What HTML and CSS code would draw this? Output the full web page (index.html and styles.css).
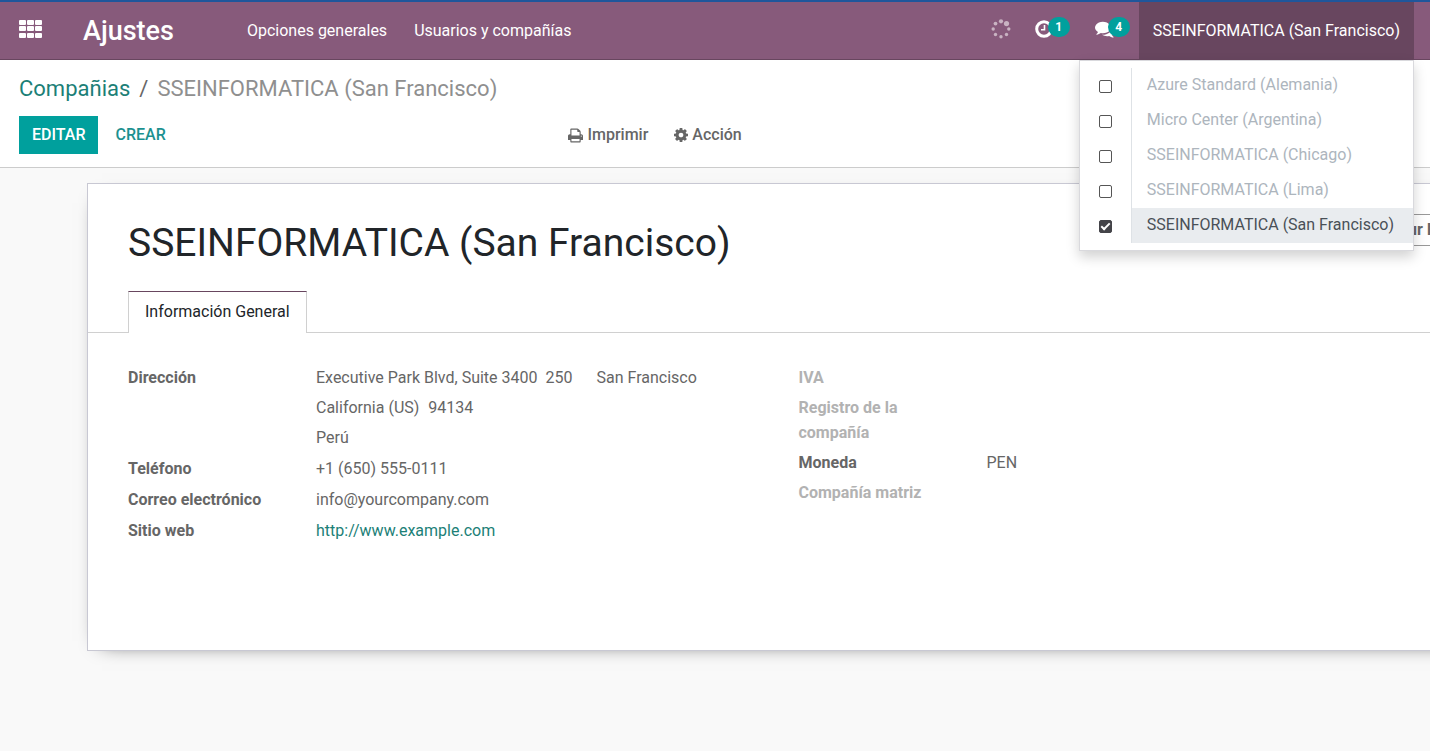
FILE: index.html
```html
<!DOCTYPE html>
<html lang="es">
<head>
<meta charset="utf-8">
<title>Ajustes - SSEINFORMATICA (San Francisco)</title>
<link rel="stylesheet" href="styles.css">
</head>
<body>
<header class="navbar">
  <button class="apps" type="button" aria-label="Aplicaciones">
    <svg width="24" height="18" viewBox="0 0 24 18" fill="#fff"><rect width="7" height="5" rx="1"/><rect x="8" width="7" height="5" rx="1"/><rect x="16" width="7" height="5" rx="1"/><rect y="6" width="7" height="5" rx="1"/><rect x="8" y="6" width="7" height="5" rx="1"/><rect x="16" y="6" width="7" height="5" rx="1"/><rect y="13" width="7" height="5" rx="1"/><rect x="8" y="13" width="7" height="5" rx="1"/><rect x="16" y="13" width="7" height="5" rx="1"/></svg>
  </button>
  <a class="brand" href="#">Ajustes</a>
  <nav class="menu">
    <a href="#">Opciones generales</a>
    <a href="#">Usuarios y compañías</a>
  </nav>
  <div class="systray">
    <svg class="spinner" width="20" height="20" viewBox="0 0 20 20" fill="#c9b3c2"><circle cx="10" cy="2.3" r="2.1"/><circle cx="15.5" cy="4.6" r="2.6"/><circle cx="17.8" cy="10" r="1.7"/><circle cx="15.5" cy="15.5" r="1.7"/><circle cx="10" cy="17.8" r="1.7"/><circle cx="4.5" cy="15.5" r="1.7"/><circle cx="2.2" cy="10" r="1.7"/><circle cx="4.5" cy="4.6" r="1.9"/></svg>
    <button class="tray" type="button" aria-label="Actividades">
      <svg width="18" height="18" viewBox="0 0 18 18" fill="none" stroke="#fff"><circle cx="9" cy="9" r="7.3" stroke-width="3"/><path d="M9.500 5V9.800H6" stroke-width="1.6"/></svg>
      <span class="badge">1</span>
    </button>
    <button class="tray" type="button" aria-label="Conversaciones">
      <svg width="20" height="20" viewBox="0 0 1792 1792" fill="#fff"><path d="M1408 768q0 139-94 257t-256.500 186.500-353.500 68.500q-86 0-176-16-124 88-278 128-36 9-86 16h-3q-11 0-20.500-8t-11.500-21q-1-3-1-6.500t.5-6.500 2-6l2.500-5 3.500-5.500 4-5 4.500-5 4-4.500q5-6 23-25t26-29.500 22.500-29 25-38.500 20.500-44q-124-72-195-177t-71-224q0-139 94-257t256.500-186.500 353.500-68.500 353.500 68.500 256.500 186.500 94 257zm384 256q0 120-71 224.500t-195 176.500q10 24 20.500 44t25 38.500 22.500 29 26 29.500 23 25q1 1 4 4.500t4.500 5 4 5 3.500 5.500l2.500 5 2 6 .5 6.500-1 6.500q-3 14-13 22t-22 7q-50-7-86-16-154-40-278-128-90 16-176 16-271 0-472-132 58 4 88 4 161 0 309-45t264-129q125-92 192-212t67-254q0-77-23-152 129 71 204 178t75 230z"/></svg>
      <span class="badge">4</span>
    </button>
    <div class="company">
      <button class="company-toggle" type="button" aria-expanded="true">SSEINFORMATICA (San Francisco)</button>
      <div class="dropdown">
        <div class="option"><span class="tick"><input type="checkbox" id="c1"></span><label for="c1">Azure Standard (Alemania)</label></div>
        <div class="option"><span class="tick"><input type="checkbox" id="c2"></span><label for="c2">Micro Center (Argentina)</label></div>
        <div class="option"><span class="tick"><input type="checkbox" id="c3"></span><label for="c3">SSEINFORMATICA (Chicago)</label></div>
        <div class="option"><span class="tick"><input type="checkbox" id="c4"></span><label for="c4">SSEINFORMATICA (Lima)</label></div>
        <div class="option selected"><span class="tick"><input type="checkbox" id="c5" checked></span><label for="c5">SSEINFORMATICA (San Francisco)</label></div>
      </div>
    </div>
  </div>
</header>

<section class="control-panel">
  <div class="breadcrumb"><a href="#">Compañias</a><span class="slash">/</span><span class="current">SSEINFORMATICA (San Francisco)</span></div>
  <div class="toolbar">
    <div class="main-actions">
      <button class="btn primary" type="button">EDITAR</button>
      <button class="btn plain" type="button">CREAR</button>
    </div>
    <div class="more-actions">
      <button class="btn tool" type="button"><svg width="15" height="15" viewBox="64 64 1664 1664" fill="#666"><path d="M448 1536h896v-256h-896v256zm0-640h896v-384h-160q-40 0-68-28t-28-68v-160h-640v640zm1152 64q0-26-19-45t-45-19-45 19-19 45 19 45 45 19 45-19 19-45zm128 0v416q0 13-9.500 22.500t-22.500 9.500h-224v160q0 40-28 68t-68 28h-960q-40 0-68-28t-28-68v-160h-224q-13 0-22.500-9.500t-9.500-22.500v-416q0-79 56.500-135.500t135.500-56.500h64v-544q0-40 28-68t68-28h672q40 0 88 20t76 48l152 152q28 28 48 76t20 88v256h64q79 0 135.500 56.500t56.500 135.500z"/></svg>Imprimir</button>
      <button class="btn tool" type="button"><svg width="14" height="14" viewBox="128 128 1536 1536" fill="#666"><path d="M1152 896q0-106-75-181t-181-75-181 75-75 181 75 181 181 75 181-75 75-181zm512-109v222q0 12-8 23t-20 13l-185 28q-19 54-39 91 35 50 107 138 10 12 10 25t-9 23q-27 37-99 108t-94 71q-12 0-26-9l-138-108q-44 23-91 38-16 136-29 186-7 28-36 28h-222q-14 0-24.500-8.500t-11.500-21.500l-28-184q-49-16-90-37l-141 107q-10 9-25 9-14 0-25-11-126-114-165-168-7-10-7-23 0-12 8-23 15-21 51-66.500t54-70.500q-27-50-41-99l-183-27q-13-2-21-12.500t-8-23.500v-222q0-12 8-23t19-13l186-28q14-46 39-92-40-57-107-138-10-12-10-24 0-10 9-23 26-36 98.500-107.500t94.500-71.500q13 0 26 10l138 107q44-23 91-38 16-136 29-186 7-28 36-28h222q14 0 24.500 8.500t11.500 21.500l28 184q49 16 90 37l142-107q9-9 24-9 13 0 25 10 129 119 165 170 7 8 7 22 0 12-8 23-15 21-51 66.500t-54 70.500q26 50 41 98l183 28q13 2 21 12.500t8 23.500z"/></svg>Acción</button>
    </div>
  </div>
</section>

<main class="content">
  <article class="sheet">
    <div class="title-row">
      <h1>SSEINFORMATICA (San Francisco)</h1>
      <button class="layout-btn" type="button">ur I</button>
    </div>
    <div class="tabs" role="tablist"><button class="tab" type="button" role="tab" aria-selected="true">Información General</button></div>
    <div class="groups">
      <dl class="group">
        <dt>Dirección</dt>
        <dd class="address">
          <div class="line"><span>Executive Park Blvd, Suite 3400</span><span class="number">250</span><span class="city">San Francisco</span></div>
          <div class="line"><span>California (US)</span><span class="zip">94134</span></div>
          <div class="line">Perú</div>
        </dd>
        <dt>Teléfono</dt><dd>+1 (650) 555-0111</dd>
        <dt>Correo electrónico</dt><dd>info@yourcompany.com</dd>
        <dt>Sitio web</dt><dd><a href="#">http://www.example.com</a></dd>
      </dl>
      <dl class="group compact">
        <dt class="empty">IVA</dt><dd></dd>
        <dt class="empty">Registro de la compañía</dt><dd></dd>
        <dt>Moneda</dt><dd>PEN</dd>
        <dt class="empty">Compañía matriz</dt><dd></dd>
      </dl>
    </div>
  </article>
</main>
</body>
</html>
```
FILE: styles.css
```css
* { box-sizing: border-box; }
body {
  margin: 0;
  min-height: 100vh;
  overflow: hidden;
  display: flex;
  flex-direction: column;
  background: #f9f9f9;
  color: #666;
  font: 16px/24px Roboto, sans-serif;
}
button { border: 0; padding: 0; background: none; font: inherit; color: inherit; cursor: pointer; }
a { color: #1c7f77; text-decoration: none; }
svg { display: block; flex: none; }

.navbar {
  display: flex;
  align-items: stretch;
  height: 60px;
  padding: 0 16px 0 19px;
  background: #875a7b;
  border-top: 2px solid #1f569b;
  border-bottom: 1px solid #68465f;
  color: #fff;
}
.navbar a { color: #fff; }
.apps { margin-right: 40px; padding-bottom: 3px; }
.brand { align-self: center; font-size: 27px; font-weight: 500; }
.menu { display: flex; align-items: center; gap: 27px; margin-left: 73px; }
.systray { display: flex; margin-left: auto; }
.spinner { margin: 17px 24px 0 0; }
.tray { position: relative; width: 36px; margin-right: 24px; padding-bottom: 3px; }
.tray:nth-of-type(2) { margin-right: 8px; }
.badge {
  position: absolute;
  left: 13px;
  top: 15px;
  min-width: 22px;
  height: 20px;
  border-radius: 10px;
  background: #00a09d;
  font-size: 12px;
  font-weight: 700;
  line-height: 20px;
  text-align: center;
}
.company { position: relative; display: flex; }
.company-toggle { padding: 0 14px; background: #68465f; }
.dropdown {
  position: absolute;
  right: 0;
  top: 58px;
  z-index: 2;
  padding: 7px 0;
  background: #fff;
  border: 1px solid #d9d9dd;
  box-shadow: 0 6px 12px rgba(0, 0, 0, .18);
  white-space: nowrap;
}
.option { display: flex; height: 35px; color: #adb5bd; }
.tick { display: flex; align-items: center; justify-content: center; width: 52px; padding-top: 2px; border-right: 1px solid #dee2e6; }
.option label { flex: 1; padding: 0 19px 0 15px; line-height: 34px; }
.selected label { background: #e9ecef; color: #495057; }
.tick input {
  appearance: none;
  position: relative;
  width: 13px;
  height: 13px;
  margin: 0;
  border: 1px solid #555;
  border-radius: 2px;
}
.tick input:checked { background: #444449; border-color: #444449; }
.tick input:checked::after {
  content: "";
  position: absolute;
  left: 3px;
  top: 0;
  box-sizing: border-box;
  width: 5px;
  height: 9px;
  border: solid #fff;
  border-width: 0 2px 2px 0;
  transform: rotate(45deg);
}

.control-panel { padding: 13px 19px; background: #fff; border-bottom: 1px solid #ccc; }
.breadcrumb { display: flex; font-size: 22px; line-height: 32px; color: #666; }
.slash { margin: 0 9px; }
.current { color: #8f8f8f; }
.toolbar { display: grid; grid-template-columns: 15fr 23fr; margin-top: 11px; }
.main-actions { display: flex; gap: 4px; }
.more-actions { display: flex; gap: 26px; }
.btn { height: 38px; font-weight: 500; }
.primary { padding: 0 13px; background: #00a09d; color: #fff; }
.plain { padding: 0 13px; color: #1c9190; }
.tool { display: flex; align-items: center; gap: 4px; }

.content { flex: 1; padding: 15px 0 0 87px; overflow: hidden; }
.sheet {
  margin-right: -80px;
  padding: 30px 40px 107px;
  background: #fff;
  border: 1px solid #c8c8d3;
  box-shadow: 0 5px 20px -15px #000;
}
.title-row { display: flex; justify-content: space-between; }
h1 { margin: 0; font-size: 39px; font-weight: 400; line-height: 58px; color: #212529; }
.layout-btn { width: 70px; height: 32px; padding: 0 8px; border: 1px solid #999; font-weight: 700; text-align: left; }
.tabs { display: flex; margin: 19px -40px 0; padding: 0 40px; box-shadow: inset 0 -1px #d0d0d0; }
.tab { height: 42px; padding: 0 16px 2px; background: #fff; border: 1px solid #d0d0d0; border-top-color: #68465f; border-bottom: 0; color: #212529; }
.groups { display: grid; grid-template-columns: 1fr 1fr; margin-top: 32px; }
.group { display: grid; grid-template-columns: 150px 1fr; column-gap: 38px; row-gap: 6px; align-content: start; margin: 0; line-height: 25px; }
.compact { row-gap: 5px; }
dt { font-weight: 700; }
.empty { color: #b2b2b2; }
dd { margin: 0; }
.address { display: grid; gap: 5px; }
.line { display: flex; }
.number { margin-left: 8px; }
.city { margin-left: 24px; }
.zip { margin-left: 9px; }
```
